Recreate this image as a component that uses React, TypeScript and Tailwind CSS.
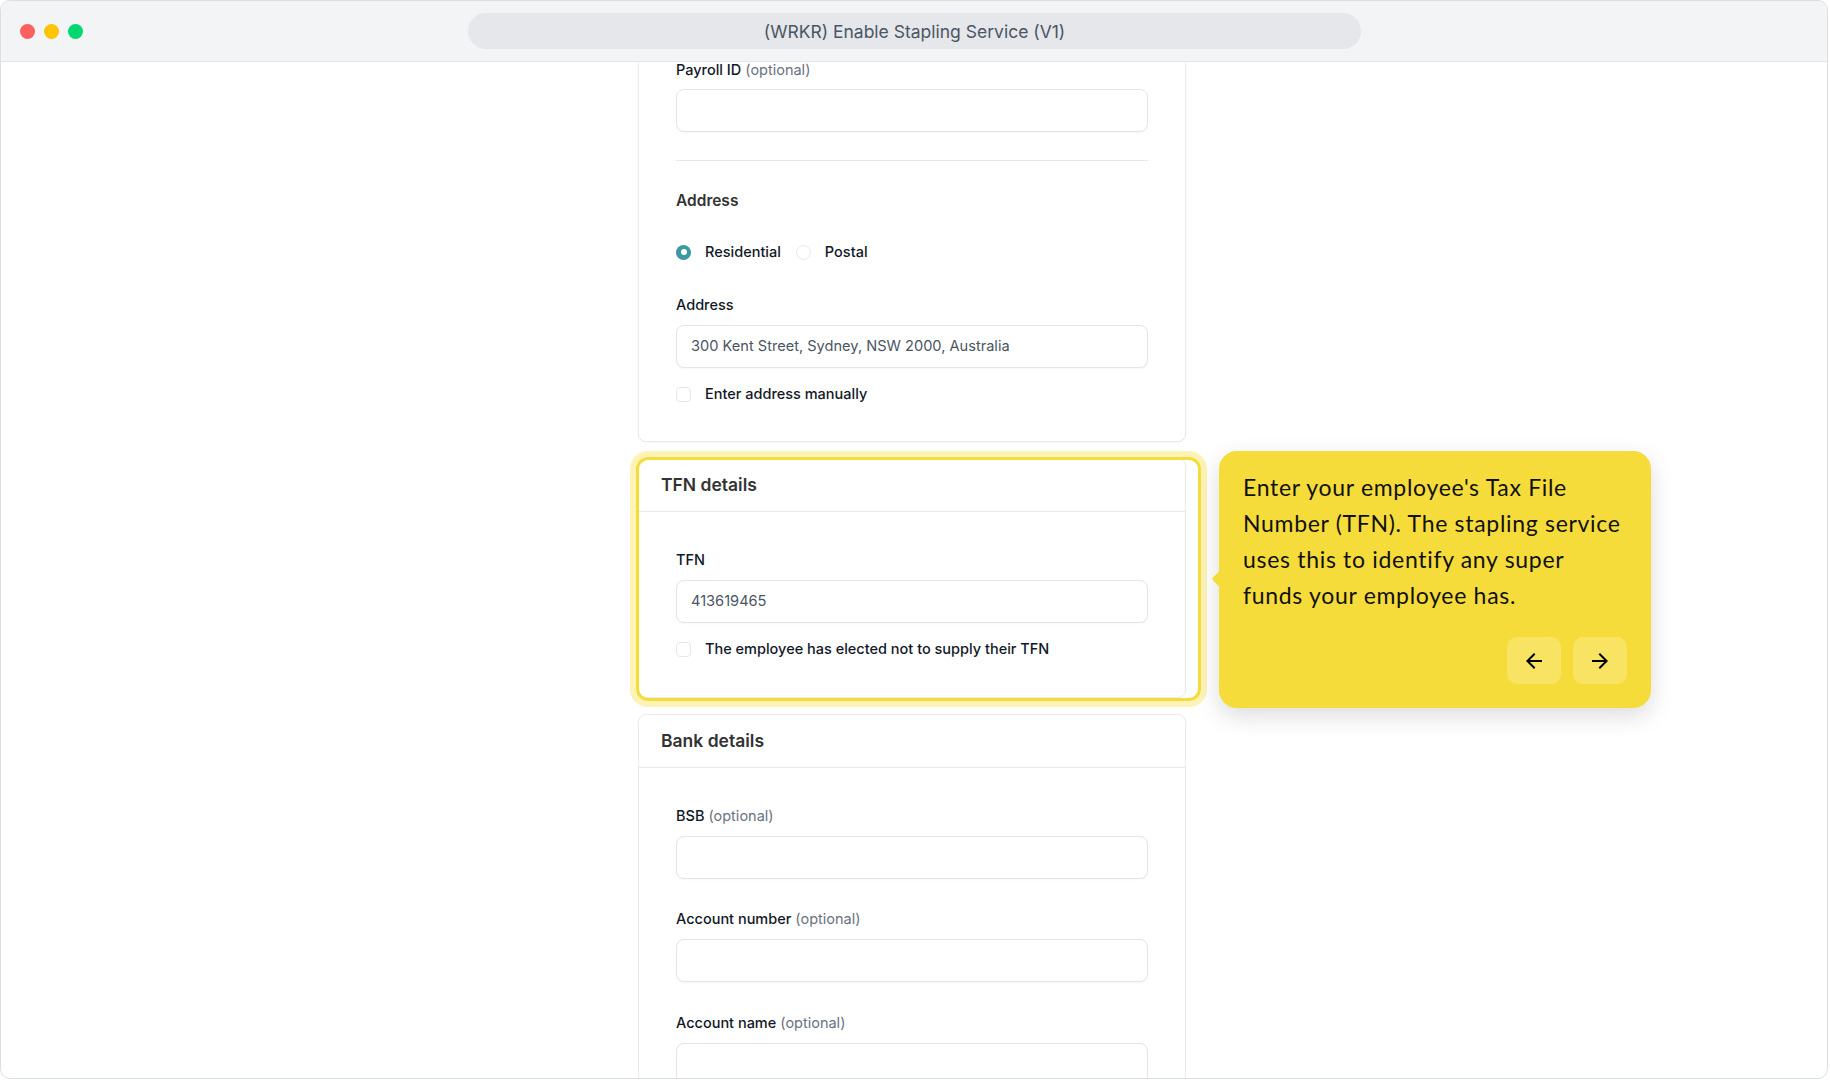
import { MdArrowBack, MdArrowForward } from "react-icons/md";

function Label({ text, optional, tight }: { text: string; optional?: boolean; tight?: boolean }) {
  return (
    <div className={`text-[14.5px] font-medium text-[#111827] ${tight ? "h-4 leading-4" : "h-5 leading-5"}`}>
      {text}
      {optional && <span className="ml-1 font-normal text-[#6b7280]">(optional)</span>}
    </div>
  );
}

function Field({ label, optional, value, tight, className = "" }: { label: string; optional?: boolean; value?: string; tight?: boolean; className?: string }) {
  return (
    <div className={className}>
      <Label text={label} optional={optional} tight={tight} />
      <div className={`${tight ? "mt-[11px]" : "mt-2.5"} flex h-[43px] items-center rounded-lg border border-[#e3e5ea] bg-white px-[14px] text-[14.6px] text-[#4b5563] shadow-[0_1px_2px_rgba(0,0,0,0.04)]`}>
        {value}
      </div>
    </div>
  );
}

function Check({ label, className = "" }: { label: string; className?: string }) {
  return (
    <div className={`flex h-5 items-center gap-[14px] ${className}`}>
      <span className="h-[15px] w-[15px] rounded-[4px] border border-[#e5e7eb] bg-white" />
      <span className="text-[14.5px] font-medium text-[#111827]">{label}</span>
    </div>
  );
}

function CardHeader({ title }: { title: string }) {
  return (
    <div className="flex h-[53px] items-center border-b border-[#e9eaee] px-[22px] text-[17.5px] font-semibold text-[#333]">
      {title}
    </div>
  );
}

export default function App() {
  return (
    <div className="h-[1080px] w-[1830px] bg-white font-['Inter',sans-serif]">
      <div className="flex h-[1079px] w-[1828px] flex-col overflow-hidden rounded-[10px] border border-[#dcdee3] bg-white">
        {/* title bar */}
        <div className="flex h-[61px] shrink-0 items-center border-b border-[#e3e5e9] bg-[#f3f4f6] pl-[19px]">
          <div className="flex gap-[9px]">
            <span className="h-[15px] w-[15px] rounded-full bg-[#fe5f61]" />
            <span className="h-[15px] w-[15px] rounded-full bg-[#ffc402]" />
            <span className="h-[15px] w-[15px] rounded-full bg-[#03d870]" />
          </div>
          <div className="ml-[385px] flex h-[36px] w-[893px] items-center justify-center rounded-full bg-[#e5e7eb] pt-[2px] text-[17.5px] text-[#4b5563]">
            (WRKR) Enable Stapling Service (V1)
          </div>
        </div>

        <main className="flex-1 overflow-hidden pl-[637px]">
          <div className="w-[548px]">
            {/* personal details (scrolled) */}
            <div className="rounded-b-lg border border-t-0 border-[#e9eaee] bg-white px-[37px] pb-[37px] shadow-[0_1px_2px_rgba(0,0,0,0.03)]">
              <Field label="Payroll ID" optional tight />
              <div className="mt-[28px] h-px bg-[#e5e7eb]" />
              <div className="mt-[28px] h-6 text-[15.5px] leading-6 font-semibold text-[#333]">Address</div>
              <div className="mt-[29px] flex h-5 items-center text-[14.5px] font-medium text-[#111827]">
                <span className="flex h-[15px] w-[15px] items-center justify-center rounded-full bg-[#3b99a4]">
                  <span className="h-[6px] w-[6px] rounded-full bg-white" />
                </span>
                <span className="ml-[14px]">Residential</span>
                <span className="ml-[15px] h-[15px] w-[15px] rounded-full border border-[#e5e7eb] bg-white" />
                <span className="ml-[14px]">Postal</span>
              </div>
              <Field className="mt-[33px]" label="Address" value="300 Kent Street, Sydney, NSW 2000, Australia" />
              <Check className="mt-4" label="Enter address manually" />
            </div>

            {/* TFN details, highlighted */}
            <div className="relative mt-4">
              <div className="rounded-lg border border-[#e9eaee] bg-white">
                <CardHeader title="TFN details" />
                <div className="px-[37px] pt-[38px] pb-[38px]">
                  <Field label="TFN" value="413619465" />
                  <Check className="mt-4" label="The employee has elected not to supply their TFN" />
                </div>
              </div>
              <div className="absolute -top-px -bottom-[3px] -left-[2px] -right-[15px] rounded-[12px] border-[3px] border-[#f6dc3b] shadow-[0_0_0_6px_#fdf3b6]" />

              {/* tooltip */}
              <div className="absolute top-[-7px] left-[581px] w-[432px] rounded-[18px] bg-[#f6dc3a] px-6 pt-[18px] pb-6 shadow-[0_8px_24px_rgba(0,0,0,0.14)]">
                <span className="absolute top-[122px] -left-[5px] h-[12px] w-[12px] rotate-45 rounded-[2px] bg-[#f6dc3a]" />
                <p className="font-['Lato',sans-serif] text-[23px] leading-[36px] tracking-[0.03em] text-[#111]">
                  <span className="whitespace-nowrap">Enter your employee's Tax File</span>
                  <br />
                  <span className="whitespace-nowrap">Number (TFN). The stapling service</span>
                  <br />
                  <span className="whitespace-nowrap">uses this to identify any super</span>
                  <br />
                  <span className="whitespace-nowrap">funds your employee has.</span>
                </p>
                <div className="mt-6 flex justify-end gap-3">
                  <button className="flex h-[47px] w-[54px] items-center justify-center rounded-[10px] bg-[#f8e462] text-black">
                    <MdArrowBack size={24} />
                  </button>
                  <button className="flex h-[47px] w-[54px] items-center justify-center rounded-[10px] bg-[#f8e462] text-black">
                    <MdArrowForward size={24} />
                  </button>
                </div>
              </div>
            </div>

            {/* bank details */}
            <div className="mt-4 rounded-lg border border-[#e9eaee] bg-white">
              <CardHeader title="Bank details" />
              <div className="px-[37px] pt-[38px] pb-[38px]">
                <Field label="BSB" optional />
                <Field className="mt-[30px]" label="Account number" optional />
                <Field className="mt-[31px]" label="Account name" optional />
              </div>
            </div>
          </div>
        </main>
      </div>
    </div>
  );
}
